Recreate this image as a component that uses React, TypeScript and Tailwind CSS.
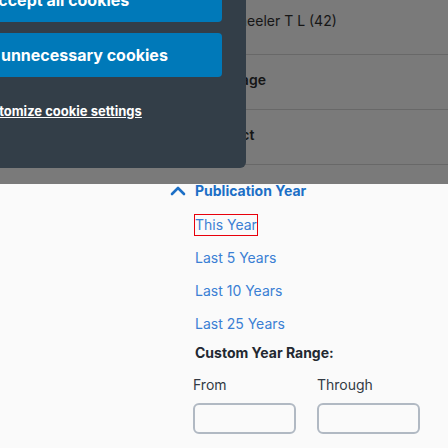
import { ChevronUp } from 'lucide-react';

const quickRanges = ['This Year', 'Last 5 Years', 'Last 10 Years', 'Last 25 Years'];

export default function App() {
  return (
    <div className="relative w-[448px] h-[448px] overflow-hidden bg-[#fafafa] font-['Inter',_sans-serif]">
      {/* dimmed page behind the cookie dialog */}
      <div className="h-[184px] bg-[#7a7a7a] text-[14px] leading-[20px] text-[#161616]">
        <div className="h-[55px] border-b border-[#686868] pt-[11px] pl-[225px]">Wheeler T L (42)</div>
        <div className="h-[55px] border-b border-[#686868] pt-[15px] pl-[199px] font-semibold">Language</div>
        <div className="h-[55px] border-b border-[#686868] pt-[15px] pl-[203px] font-semibold">Subject</div>
      </div>

      <div className="absolute top-0 left-[-130px] w-[376px] h-[168px] rounded-br-md bg-[#333e48] px-6 flex flex-col items-center">
        <button className="w-[328px] h-[44px] -mt-[22px] rounded bg-[#0079b9] text-white text-[16px] font-bold leading-[24px]">
          Accept all cookies
        </button>
        <button className="w-[328px] h-[44px] mt-[11px] rounded bg-[#0079b9] text-white text-[16px] font-bold leading-[24px]">
          Reject unnecessary cookies
        </button>
        <a href="#" className="mt-[24px] text-[13px] leading-[20px] font-bold text-white underline">
          Customize cookie settings
        </a>
      </div>

      {/* publication year facet */}
      <div className="-mt-[1px] pl-[166px]">
        <div className="flex h-[15px] items-center gap-[5px] text-[14px] leading-none font-bold text-[#1c6fc6]">
          <ChevronUp className="w-[24px] h-[24px] shrink-0" strokeWidth={2.6} />
          <span>Publication Year</span>
        </div>
        <ul className="mt-[16px] ml-[28px] flex flex-col gap-[11px]">
          {quickRanges.map((label, i) => (
            <li key={label} className="flex">
              <a
                href="#"
                className={
                  i === 0
                    ? 'block border border-[#e8000b] text-[14px] leading-[20px] text-[#3b7fd4]'
                    : 'block border border-transparent text-[14px] leading-[20px] text-[#3b7fd4]'
                }
              >
                {label}
              </a>
            </li>
          ))}
        </ul>
        <div className="mt-[8px] ml-[27px]">
          <p className="pl-[2px] text-[14px] leading-[20px] font-bold text-[#222831]">Custom Year Range:</p>
          <div className="mt-[12px] grid grid-cols-[103px_103px] gap-x-[21px]">
            <label className="text-[14px] leading-[20px] text-[#333a44]">From</label>
            <label className="text-[14px] leading-[20px] text-[#333a44]">Through</label>
            <input className="mt-[8px] h-[31px] rounded-md border-2 border-[#b1b9c3] bg-transparent" />
            <input className="mt-[8px] h-[31px] rounded-md border-2 border-[#b1b9c3] bg-transparent" />
          </div>
        </div>
      </div>
    </div>
  );
}
